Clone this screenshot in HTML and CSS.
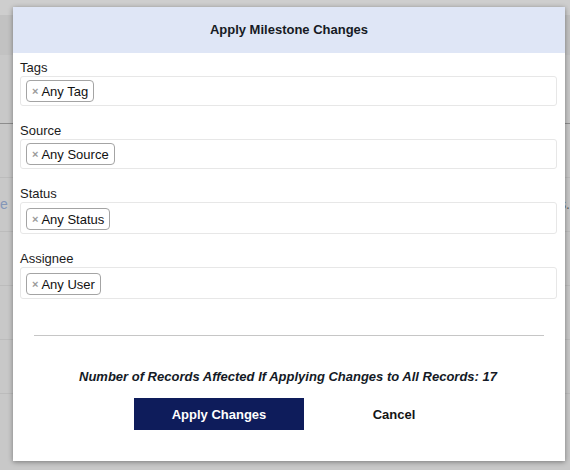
FILE: index.html
```html
<!DOCTYPE html>
<html>
<head>
<meta charset="utf-8">
<link rel="stylesheet" href="styles.css">
</head>
<body>
<div class="page">
  <div class="bg-top"></div>
  <div class="bg-bar"></div>
  <div class="bg-section"></div>
  <div class="bg-row"></div>
  <div class="bg-row bg-row-text"><span class="bg-link">e</span><span class="bg-dark">s.</span></div>
  <div class="bg-row"></div>
  <div class="bg-row"></div>
  <div class="bg-row"></div>
</div>

<div class="modal">
  <div class="modal-header">Apply Milestone Changes</div>
  <div class="modal-body">
    <div class="field">
      <div class="field-label">Tags</div>
      <div class="select-box">
        <span class="chip"><span class="chip-x">×</span>Any Tag</span>
      </div>
    </div>
    <div class="field">
      <div class="field-label">Source</div>
      <div class="select-box">
        <span class="chip"><span class="chip-x">×</span>Any Source</span>
      </div>
    </div>
    <div class="field">
      <div class="field-label">Status</div>
      <div class="select-box select-box-tall">
        <span class="chip"><span class="chip-x">×</span>Any Status</span>
      </div>
    </div>
    <div class="field field-last">
      <div class="field-label">Assignee</div>
      <div class="select-box select-box-tall">
        <span class="chip"><span class="chip-x">×</span>Any User</span>
      </div>
    </div>
    <hr class="divider">
    <div class="records">Number of Records Affected If Applying Changes to All Records: 17</div>
    <div class="actions">
      <button class="btn btn-primary">Apply Changes</button>
      <button class="btn btn-link">Cancel</button>
    </div>
  </div>
</div>
</body>
</html>
```
FILE: styles.css
```css
html, body {
  margin: 0;
  padding: 0;
}
body {
  background: #c8c8c8;
  font-family: "Liberation Sans", Arial, Helvetica, sans-serif;
  width: 570px;
  height: 470px;
  overflow: hidden;
  position: relative;
}
.page {
  width: 570px;
}
.bg-top {
  height: 15px;
  background: #cecece;
}
.bg-bar {
  height: 40px;
  background: #c2c2c2;
}
.bg-section {
  height: 68px;
  border-bottom: 1px solid #8d8d8d;
}
.bg-row {
  height: 53px;
  border-bottom: 1px solid #bcbcbc;
}
.bg-row-text {
  display: flex;
  justify-content: space-between;
  align-items: center;
  font-size: 14px;
  padding-bottom: 2px;
  box-sizing: border-box;
  height: 54px;
}
.bg-link {
  color: #8496b8;
}
.bg-dark {
  color: #5e5e5e;
  margin-right: 0;
}

.modal {
  position: absolute;
  left: 13px;
  top: 7px;
  width: 552px;
  height: 454px;
  background: #ffffff;
  box-shadow: 0 1px 5px rgba(0, 0, 0, 0.4);
}
.modal-header {
  height: 46px;
  line-height: 46px;
  background: #dfe6f6;
  text-align: center;
  font-weight: bold;
  font-size: 13px;
  color: #161a24;
}
.modal-body {
  padding: 7px 8px 0 7px;
}
.field {
  margin-bottom: 17px;
}
.field-last {
  margin-bottom: 36px;
}
.field-label {
  font-size: 13px;
  line-height: 16px;
  color: #1b1b1b;
}
.select-box {
  height: 30px;
  box-sizing: border-box;
  border: 1px solid #e7e7e7;
  border-radius: 3px;
  padding: 3px 0 0 5px;
}
.select-box-tall {
  height: 32px;
  padding-top: 5px;
}
.chip {
  display: inline-flex;
  align-items: center;
  height: 22px;
  box-sizing: border-box;
  border: 1px solid #a4a4a4;
  border-radius: 4px;
  padding: 0 5px 0 5px;
  font-size: 13px;
  color: #111;
}
.chip-x {
  font-size: 11px;
  font-weight: bold;
  color: #9a9a9a;
  margin-right: 3px;
}
.divider {
  border: 0;
  border-top: 1px solid #c6c6c6;
  margin: 0 13px 0 14px;
  height: 0;
}
.records {
  margin-top: 33px;
  text-align: center;
  font-size: 13px;
  line-height: 16px;
  font-weight: bold;
  font-style: italic;
  color: #141a26;
  padding-right: 1px;
}
.actions {
  display: flex;
  margin-top: 13px;
  padding-left: 114px;
  gap: 5px;
}
.btn {
  width: 170px;
  height: 32px;
  border: 0;
  font-family: "Liberation Sans", Arial, Helvetica, sans-serif;
  font-size: 13px;
  font-weight: bold;
  cursor: pointer;
}
.btn-primary {
  background: #0e1c5b;
  color: #ffffff;
}
.btn-link {
  background: transparent;
  color: #141414;
}
```
